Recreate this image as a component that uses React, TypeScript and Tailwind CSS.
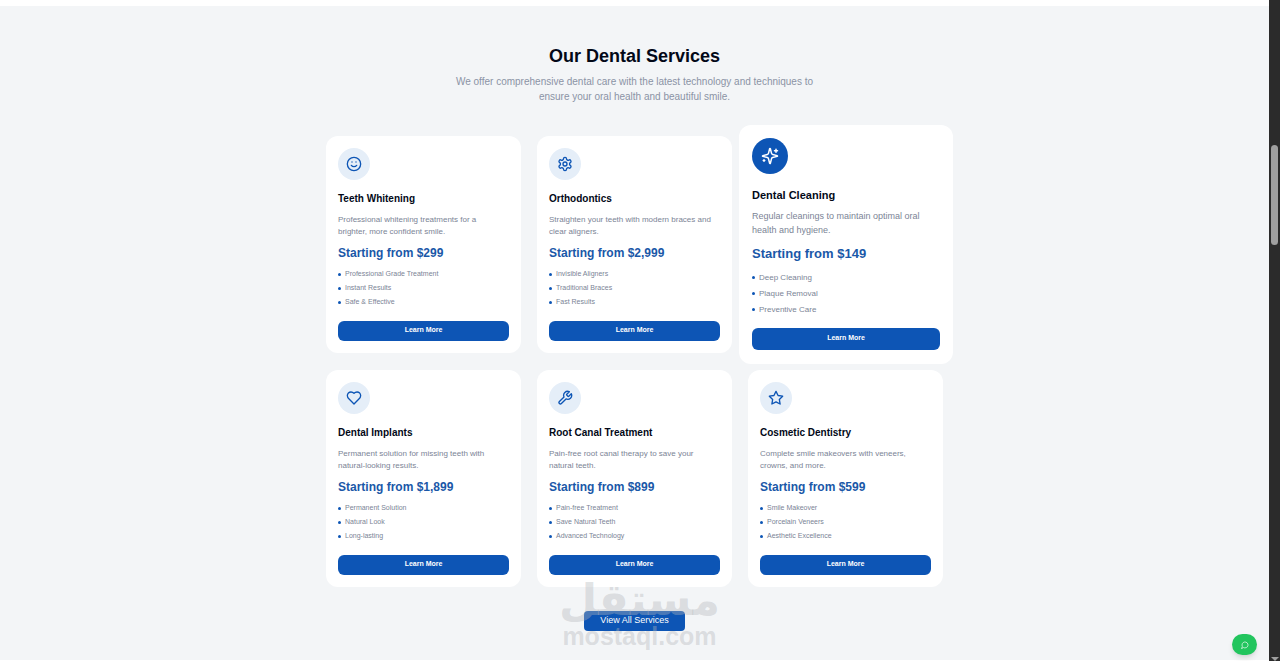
import type { ReactNode } from "react";
import { Smile } from "lucide-react";
import clsx from "clsx";

type IconProps = { className?: string };

function Icon({ className, children }: IconProps & { children: ReactNode }) {
  return (
    <svg
      viewBox="0 0 24 24"
      fill="none"
      stroke="currentColor"
      strokeWidth={2}
      strokeLinecap="round"
      strokeLinejoin="round"
      className={className}
      aria-hidden="true"
    >
      {children}
    </svg>
  );
}

function GearIcon({ className }: IconProps) {
  return (
    <Icon className={className}>
      <path d="M12.22 2h-.44a2 2 0 0 0-2 2v.18a2 2 0 0 1-1 1.73l-.43.25a2 2 0 0 1-2 0l-.15-.08a2 2 0 0 0-2.73.73l-.22.38a2 2 0 0 0 .73 2.73l.15.1a2 2 0 0 1 1 1.72v.51a2 2 0 0 1-1 1.74l-.15.09a2 2 0 0 0-.73 2.73l.22.38a2 2 0 0 0 2.73.73l.15-.08a2 2 0 0 1 2 0l.43.25a2 2 0 0 1 1 1.73V20a2 2 0 0 0 2 2h.44a2 2 0 0 0 2-2v-.18a2 2 0 0 1 1-1.73l.43-.25a2 2 0 0 1 2 0l.15.08a2 2 0 0 0 2.73-.73l.22-.39a2 2 0 0 0-.73-2.73l-.15-.08a2 2 0 0 1-1-1.74v-.5a2 2 0 0 1 1-1.74l.15-.09a2 2 0 0 0 .73-2.73l-.22-.38a2 2 0 0 0-2.73-.73l-.15.08a2 2 0 0 1-2 0l-.43-.25a2 2 0 0 1-1-1.73V4a2 2 0 0 0-2-2z" />
      <circle cx="12" cy="12" r="3" />
    </Icon>
  );
}

function SparklesIcon({ className }: IconProps) {
  return (
    <Icon className={className}>
      <path d="M9.937 15.5A2 2 0 0 0 8.5 14.063l-6.135-1.582a.5.5 0 0 1 0-.962L8.5 9.936A2 2 0 0 0 9.937 8.5l1.582-6.135a.5.5 0 0 1 .963 0L14.063 8.5A2 2 0 0 0 15.5 9.937l6.135 1.581a.5.5 0 0 1 0 .964L15.5 14.063a2 2 0 0 0-1.437 1.437l-1.582 6.135a.5.5 0 0 1-.963 0z" />
      <path d="M20 3v4M22 5h-4M4 17v2M5 18H3" />
    </Icon>
  );
}

function HeartIcon({ className }: IconProps) {
  return (
    <Icon className={className}>
      <path d="M19 14c1.49-1.46 3-3.21 3-5.5A5.5 5.5 0 0 0 16.5 3c-1.76 0-3 .5-4.5 2-1.5-1.5-2.74-2-4.5-2A5.5 5.5 0 0 0 2 8.5c0 2.3 1.5 4.05 3 5.5l7 7Z" />
    </Icon>
  );
}

function WrenchIcon({ className }: IconProps) {
  return (
    <Icon className={className}>
      <path d="M14.7 6.3a1 1 0 0 0 0 1.4l1.6 1.6a1 1 0 0 0 1.4 0l3.77-3.77a6 6 0 0 1-7.94 7.94l-6.91 6.91a2.12 2.12 0 0 1-3-3l6.91-6.91a6 6 0 0 1 7.94-7.94l-3.76 3.76z" />
    </Icon>
  );
}

function StarIcon({ className }: IconProps) {
  return (
    <Icon className={className}>
      <polygon points="12 2 15.09 8.26 22 9.27 17 14.14 18.18 21.02 12 17.77 5.82 21.02 7 14.14 2 9.27 8.91 8.26 12 2" />
    </Icon>
  );
}

function ChatIcon({ className }: IconProps) {
  return (
    <Icon className={className}>
      <path d="M7.9 20A9 9 0 1 0 4 16.1L2 22Z" />
    </Icon>
  );
}

type Service = {
  icon: (props: IconProps) => ReactNode;
  title: string;
  description: string;
  price: string;
  features: string[];
  featured?: boolean;
};

const services: Service[] = [
  {
    icon: ({ className }) => <Smile className={className} />,
    title: "Teeth Whitening",
    description:
      "Professional whitening treatments for a brighter, more confident smile.",
    price: "$299",
    features: ["Professional Grade Treatment", "Instant Results", "Safe & Effective"],
  },
  {
    icon: GearIcon,
    title: "Orthodontics",
    description: "Straighten your teeth with modern braces and clear aligners.",
    price: "$2,999",
    features: ["Invisible Aligners", "Traditional Braces", "Fast Results"],
  },
  {
    icon: SparklesIcon,
    title: "Dental Cleaning",
    description: "Regular cleanings to maintain optimal oral health and hygiene.",
    price: "$149",
    features: ["Deep Cleaning", "Plaque Removal", "Preventive Care"],
    featured: true,
  },
  {
    icon: HeartIcon,
    title: "Dental Implants",
    description:
      "Permanent solution for missing teeth with natural-looking results.",
    price: "$1,899",
    features: ["Permanent Solution", "Natural Look", "Long-lasting"],
  },
  {
    icon: WrenchIcon,
    title: "Root Canal Treatment",
    description: "Pain-free root canal therapy to save your natural teeth.",
    price: "$899",
    features: ["Pain-free Treatment", "Save Natural Teeth", "Advanced Technology"],
  },
  {
    icon: StarIcon,
    title: "Cosmetic Dentistry",
    description: "Complete smile makeovers with veneers, crowns, and more.",
    price: "$599",
    features: ["Smile Makeover", "Porcelain Veneers", "Aesthetic Excellence"],
  },
];

function ServiceCard({ service }: { service: Service }) {
  const { icon: CardIcon, title, description, price, features, featured } = service;

  return (
    <article
      className={clsx(
        "flex flex-col bg-white rounded-xl",
        featured ? "-ml-[9px] -mr-[10px] -my-[11px] p-[13px]" : "p-3"
      )}
    >
      <div
        className={clsx(
          "flex items-center justify-center rounded-full",
          featured
            ? "size-9 bg-[#0d55b5] text-white"
            : "size-8 bg-[#e5eef8] text-[#0d55b5]"
        )}
      >
        <CardIcon className={featured ? "size-[18px]" : "size-4"} />
      </div>

      <h3
        className={clsx(
          "font-bold text-[#020817]",
          featured
            ? "mt-[13px] text-[11px] leading-[16px]"
            : "mt-3 text-[10px] leading-[14px]"
        )}
      >
        {title}
      </h3>
      <p
        className={clsx(
          "pr-1 text-[#7b8496]",
          featured
            ? "mt-[6px] text-[9px] leading-[14px]"
            : "mt-2 text-[8px] leading-[12px]"
        )}
      >
        {description}
      </p>
      <p
        className={clsx(
          "font-bold text-[#1a58a8]",
          featured
            ? "mt-2 text-[13px] leading-[18px]"
            : "mt-[7px] text-[12px] leading-[16px]"
        )}
      >
        Starting from {price}
      </p>

      <ul
        className={clsx(
          "flex flex-col text-[#7b8496]",
          featured
            ? "mt-[9px] gap-[5px] text-[8px] leading-[11px]"
            : "mt-2 gap-1 text-[7px] leading-[10px]"
        )}
      >
        {features.map((feature) => (
          <li key={feature} className="flex items-center gap-1">
            <span className="size-[3px] rounded-full bg-[#0d55b5]" />
            {feature}
          </li>
        ))}
      </ul>

      <button
        type="button"
        className={clsx(
          "w-full rounded-md bg-[#0d55b5] pb-px text-[7px] font-bold text-white",
          featured ? "mt-[13px] h-[22px]" : "mt-[14px] h-5"
        )}
      >
        Learn More
      </button>
    </article>
  );
}

// Brand mark laid over the bottom of the section
function Watermark() {
  return (
    <div className="pointer-events-none absolute bottom-3 inset-x-0 flex flex-col items-center pl-[10px] font-bold text-[#b4b7bb]/40">
      <span
        lang="ar"
        dir="rtl"
        className="font-['DejaVu_Sans',sans-serif] text-[44px] leading-[48px]"
      >
        مستقل
      </span>
      <span className="text-[25px] leading-[24px]">mostaql.com</span>
    </div>
  );
}

function Scrollbar() {
  return (
    <div className="relative w-[11px] shrink-0 bg-[#2b2b2b]">
      <div className="absolute top-[145px] inset-x-[2px] h-[100px] rounded-full bg-[#9f9f9f]" />
      <div className="absolute bottom-0 left-[2px] border-x-4 border-t-4 border-x-transparent border-t-[#9f9f9f]" />
    </div>
  );
}

export default function App() {
  return (
    <div className="flex min-h-screen bg-white font-['Liberation_Sans',Arial,sans-serif]">
      <main className="relative flex-1 pt-[6px]">
        <section className="relative bg-[#f3f5f7] pt-10 pb-[29px]">
          <header className="mx-auto max-w-[380px] text-center">
            <h2 className="text-[18px] leading-[20px] font-bold text-[#020817]">
              Our Dental Services
            </h2>
            <p className="mt-2 text-[10px] leading-[15px] text-[#8b93a5]">
              We offer comprehensive dental care with the latest technology and
              techniques to ensure your oral health and beautiful smile.
            </p>
          </header>

          <div className="mx-auto mt-8 grid max-w-[617px] grid-cols-3 gap-x-4 gap-y-[17px]">
            {services.map((service) => (
              <ServiceCard key={service.title} service={service} />
            ))}
          </div>

          <div className="mt-6 flex justify-center">
            <button
              type="button"
              className="h-5 rounded bg-[#0d55b5] px-4 text-[9px] text-white"
            >
              View All Services
            </button>
          </div>

          <Watermark />
        </section>

        <button
          type="button"
          aria-label="Open chat"
          className="absolute right-3 bottom-[6px] flex h-[21px] w-[25px] items-center justify-center rounded-full bg-[#22c55e] text-white shadow-md"
        >
          <ChatIcon className="size-2" />
        </button>
      </main>

      <Scrollbar />
    </div>
  );
}
